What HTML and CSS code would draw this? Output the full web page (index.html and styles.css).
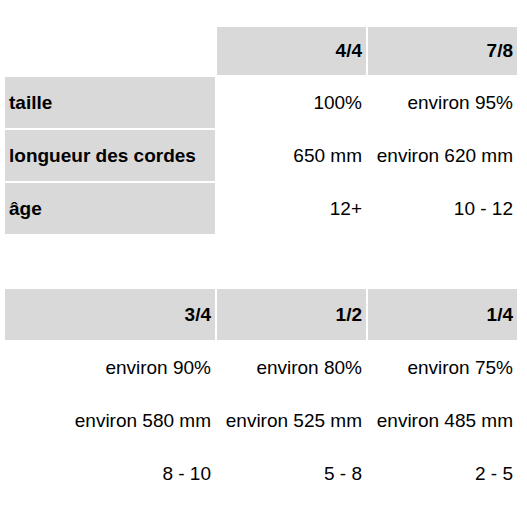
FILE: index.html
```html
<!DOCTYPE html>
<html lang="fr">
<head>
<meta charset="utf-8">
<title>Tailles</title>
<link rel="stylesheet" href="styles.css">
</head>
<body>
<div class="page">
  <table class="sizes first">
    <colgroup><col class="c-label"><col class="c-val"><col class="c-val"></colgroup>
    <thead>
      <tr class="head-row"><th class="blank"></th><th class="hcell">4/4</th><th class="hcell">7/8</th></tr>
    </thead>
    <tbody>
      <tr class="row"><th class="label">taille</th><td class="val">100%</td><td class="val">environ 95%</td></tr>
      <tr class="row"><th class="label">longueur des cordes</th><td class="val">650 mm</td><td class="val">environ 620 mm</td></tr>
      <tr class="row"><th class="label">âge</th><td class="val">12+</td><td class="val">10 - 12</td></tr>
    </tbody>
  </table>
  <table class="sizes second">
    <colgroup><col class="c-label"><col class="c-val"><col class="c-val"></colgroup>
    <thead>
      <tr class="head-row tall"><th class="hcell">3/4</th><th class="hcell">1/2</th><th class="hcell">1/4</th></tr>
    </thead>
    <tbody>
      <tr class="row"><td class="val">environ 90%</td><td class="val">environ 80%</td><td class="val">environ 75%</td></tr>
      <tr class="row"><td class="val">environ 580 mm</td><td class="val">environ 525 mm</td><td class="val">environ 485 mm</td></tr>
      <tr class="row"><td class="val">8 - 10</td><td class="val">5 - 8</td><td class="val">2 - 5</td></tr>
    </tbody>
  </table>
</div>
</body>
</html>
```
FILE: styles.css
```css
html, body {
  margin: 0;
  padding: 0;
  background: #ffffff;
}
.page {
  padding: 25px 0 0 3px;
  font-family: "Liberation Sans", Arial, sans-serif;
  font-size: 19px;
  color: #000000;
}
.sizes {
  border-collapse: separate;
  border-spacing: 2px;
  table-layout: fixed;
  width: 516px;
}
.second {
  margin-top: 51px;
}
.c-label { width: 210px; }
.c-val { width: 149px; }
.sizes th, .sizes td {
  padding: 0 4px;
  vertical-align: middle;
  white-space: nowrap;
  line-height: 22px;
}
.head-row { height: 48px; }
.head-row.tall { height: 51px; }
.row { height: 51px; }
.hcell {
  background: #d9d9d9;
  font-weight: bold;
  text-align: right;
}
.blank { background: transparent; }
.label {
  background: #d9d9d9;
  font-weight: bold;
  text-align: left;
}
.val {
  text-align: right;
  font-weight: normal;
}
```
